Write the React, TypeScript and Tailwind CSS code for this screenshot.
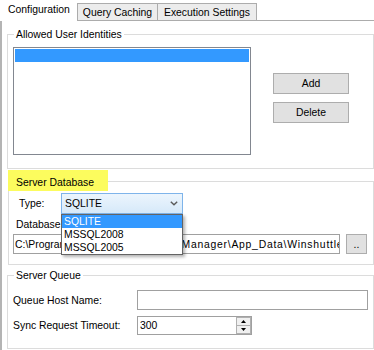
import React from "react";

function Group({ caption, className, children }: { caption: React.ReactNode; className: string; children: React.ReactNode }) {
  return (
    <div className={`relative border border-[#dcdcdc] ${className}`}>
      <div className="absolute -top-[7px] left-[6px] bg-white px-[2px] leading-[13px]">{caption}</div>
      {children}
    </div>
  );
}

function Btn({ children, className }: { children: React.ReactNode; className: string }) {
  return (
    <div className={`flex items-center justify-center border border-[#adadad] bg-[#e1e1e1] ${className}`}>{children}</div>
  );
}

function Arrow({ up }: { up?: boolean }) {
  return (
    <svg width="5" height="3" viewBox="0 0 5 3">
      <path d={up ? "M2.5 0 L5 3 L0 3 Z" : "M0 0 L5 0 L2.5 3 Z"} fill="#000" />
    </svg>
  );
}

export default function App() {
  return (
    <div className="h-[350px] w-[374px] overflow-hidden bg-white font-['Liberation_Sans',Arial,sans-serif] text-[10.4px] leading-[13px] text-black">
      {/* tab strip */}
      <div className="flex h-[21px] items-end">
        <div className="flex h-[21px] w-[77px] items-center bg-white pb-[2px] pl-[8px]">Configuration</div>
        <div className="flex h-[18px] w-[80px] items-center justify-center border-t border-b border-l border-[#acacac] bg-[#ececec]">
          Query Caching
        </div>
        <div className="flex h-[18px] w-[100px] items-center justify-center border border-[#acacac] bg-[#ececec]">
          Execution Settings
        </div>
        <div className="h-[18px] flex-1 border-b border-[#acacac]" />
      </div>

      {/* tab page */}
      <div className="flex h-[329px] flex-col border-l-2 border-[#b4b4b4]">
        <Group caption="Allowed User Identities" className="mt-[13px] ml-[5px] h-[135px] w-[367px]">
          <div className="flex pt-[12px] pl-[5px]">
            <div className="h-[108px] w-[238px] border border-[#828790] bg-white p-[1px]">
              <div className="h-[13px] bg-[#3399ff]" />
            </div>
            <div className="ml-[22px] flex flex-col gap-[8px] pt-[26px]">
              <Btn className="h-[21px] w-[76px]">Add</Btn>
              <Btn className="h-[21px] w-[76px]">Delete</Btn>
            </div>
          </div>
        </Group>

        <div className="relative mt-[12px] ml-[6px] h-[84px] w-[366px] border border-[#dcdcdc]">
          <div className="absolute -top-[12px] -left-[1px] h-[21px] w-[100px] bg-[#fcfc5e] pt-[6px] pl-[8px]">Server Database</div>
          <div className="flex items-center pt-[11px] pl-[10px]">
            <div className="w-[42px]">Type:</div>
            <div className="relative h-[21px] w-[122px]">
              <div className="flex h-full items-center justify-between border border-[#7eb4ea] bg-gradient-to-b from-[#ecf5fd] to-[#d6e9f9] pr-[4px] pl-[3px]">
                <span>SQLITE</span>
                <svg width="8" height="5" viewBox="0 0 8 5">
                  <path d="M0.8 0.8 L4 3.8 L7.2 0.8" fill="none" stroke="#5a5a5a" strokeWidth="1.4" />
                </svg>
              </div>
              <div className="absolute top-[21px] left-0 z-10 w-[122px] border border-[#646464] bg-white shadow-[2px_2px_3px_rgba(0,0,0,0.3)]">
                <div className="h-[13px] bg-[#3399ff] pl-[2px] text-white">SQLITE</div>
                <div className="h-[13px] pl-[2px]">MSSQL2008</div>
                <div className="h-[13px] pl-[2px]">MSSQL2005</div>
              </div>
            </div>
          </div>
          <div className="mt-[4px] pl-[7px]">Database</div>
          <div className="mt-[3px] flex pl-[4px]">
            <div className="flex h-[20px] w-[327px] items-center overflow-hidden border border-[#a0a0a0] pl-[1px] whitespace-nowrap">
              C:\Program Files\Winshuttle\Server
              <span className="tracking-[0.75px]">\Manager\App_Data\Winshuttle.db</span>
            </div>
            <Btn className="ml-[6px] h-[20px] w-[21px]">..</Btn>
          </div>
        </div>

        <Group caption="Server Queue" className="mt-[10px] ml-[5px] h-[74px] w-[367px]">
          <div className="flex items-center pt-[14px] pl-[5px]">
            <div className="w-[124px]">Queue Host Name:</div>
            <div className="h-[20px] w-[231px] border border-[#a0a0a0]" />
          </div>
          <div className="mt-[6px] flex items-center pl-[5px]">
            <div className="w-[124px]">Sync Request Timeout:</div>
            <div className="flex h-[19px] w-[115px] border border-[#a0a0a0]">
              <div className="flex flex-1 items-center pl-[2px]">300</div>
              <div className="flex w-[15px] flex-col">
                <div className="flex h-[9px] items-center justify-center border border-[#b0b0b0] bg-[#f0f0f0]">
                  <Arrow up />
                </div>
                <div className="flex h-[8px] items-center justify-center border border-t-0 border-[#b0b0b0] bg-[#f0f0f0]">
                  <Arrow />
                </div>
              </div>
            </div>
          </div>
        </Group>
      </div>
    </div>
  );
}
